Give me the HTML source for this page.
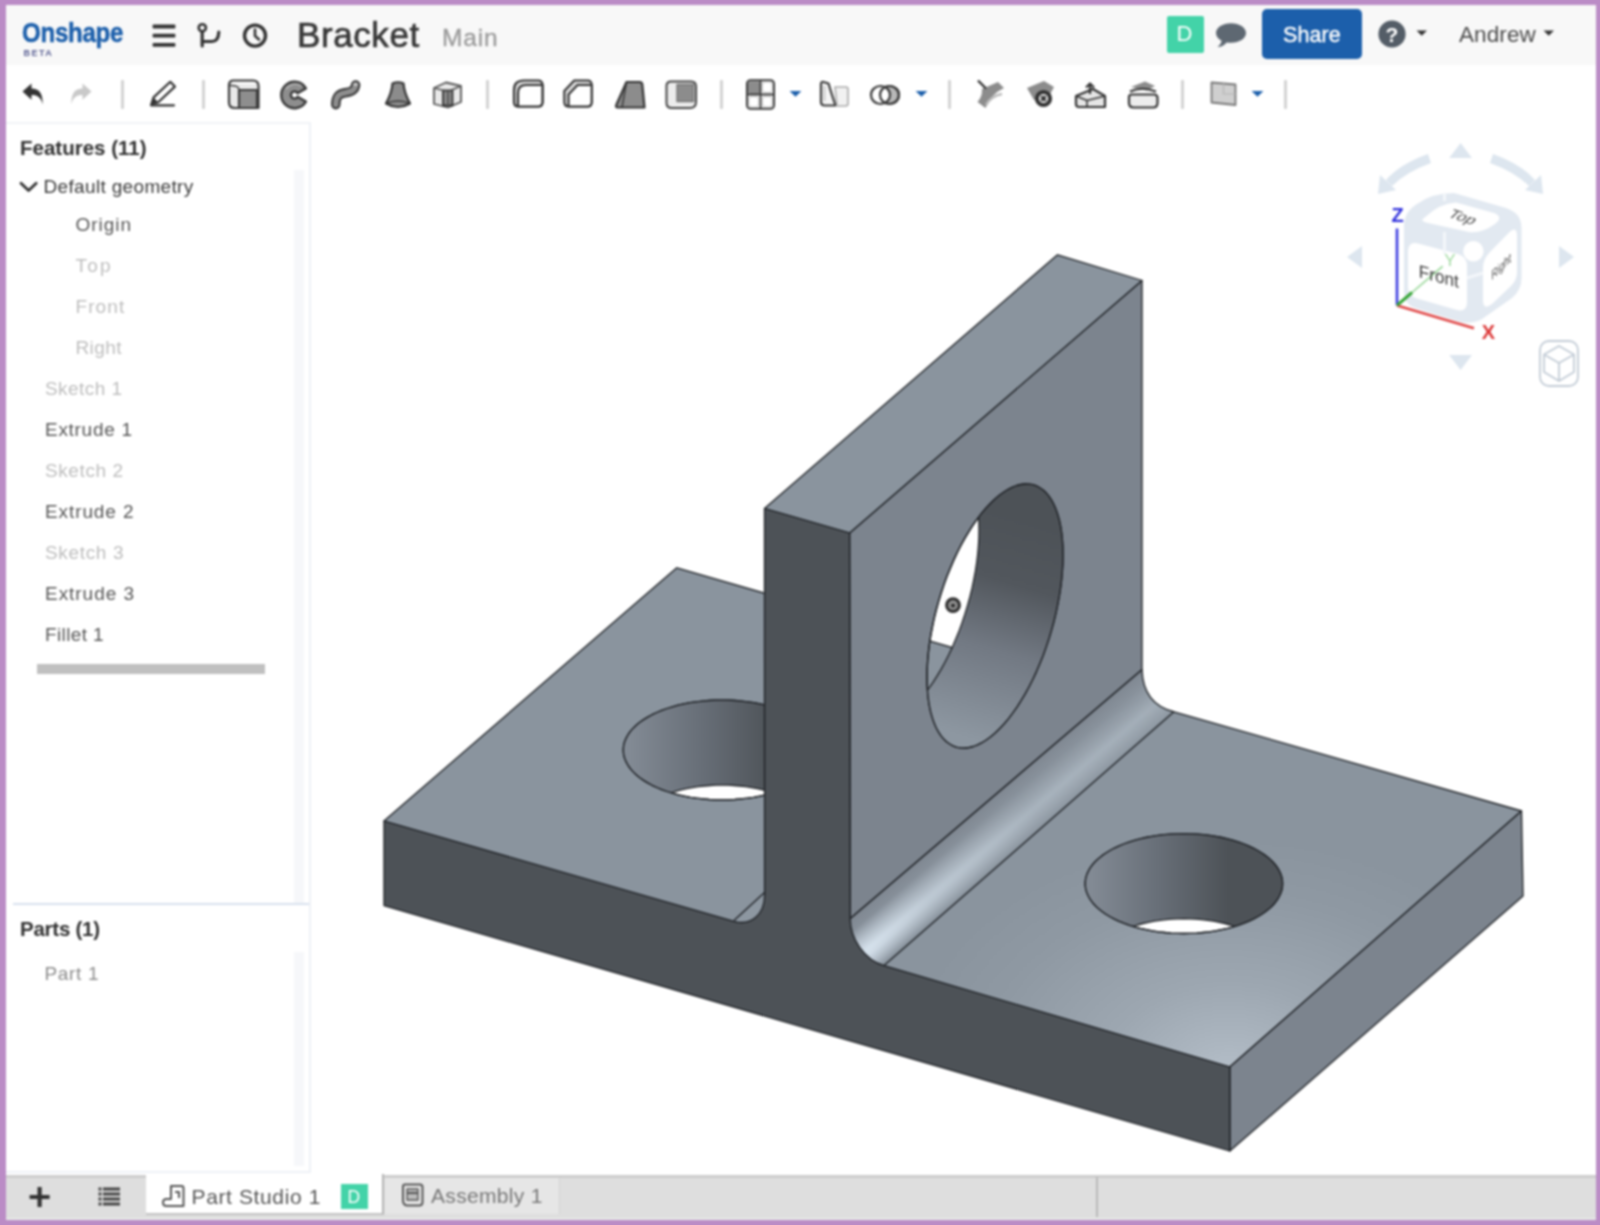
<!DOCTYPE html>
<html lang="en">
<head>
<meta charset="utf-8">
<title>Bracket - Onshape</title>
<style>
*{box-sizing:border-box;margin:0;padding:0}
html,body{width:1600px;height:1225px;overflow:hidden;background:#bb8cc6;font-family:"Liberation Sans","DejaVu Sans",sans-serif;color:#333}
.abs{position:absolute}
#app{position:absolute;left:6px;top:5px;width:1590px;height:1215px;background:#fff;overflow:hidden}
#page{position:absolute;left:0;top:0;width:1600px;height:1225px;overflow:hidden;filter:blur(1.1px)}
.hdr{position:absolute;left:6px;top:5px;width:1590px;height:60px;background:#f8f8f8}
.t{position:absolute;white-space:nowrap;line-height:1}
.model{position:absolute;left:0;top:0}
.sep{position:absolute;top:80px;width:3px;height:29px;background:#d3d3d3;border-radius:1px}
.ico{position:absolute}
.row{position:absolute;white-space:nowrap;line-height:1;font-size:19px;letter-spacing:-0.2px}
.dim{color:#bdbdbd}
.mid{color:#555}
</style>
</head>
<body>
<div id="page">
<div id="app"></div>
<div class="hdr"></div>

<!-- header -->
<div class="t" id="logo" style="left:22px;top:18.5px;font-size:27.5px;font-weight:bold;color:#1c5fab;transform-origin:0 0;transform:scaleX(0.875);letter-spacing:-0.3px;-webkit-text-stroke:0.5px #1c5fab">Onshape</div>
<div class="t" id="beta" style="left:23.5px;top:48.5px;font-size:9px;font-weight:bold;color:#5b6194;letter-spacing:1.5px">BETA</div>
<svg class="ico" style="left:150px;top:20px" width="30" height="30" viewBox="0 0 30 30"><g fill="#333"><rect x="2.6" y="4.5" width="22.8" height="3.9" rx="1"/><rect x="2.6" y="13.7" width="22.8" height="3.9" rx="1"/><rect x="2.6" y="22.9" width="22.8" height="3.9" rx="1"/></g></svg>
<svg class="ico" style="left:194px;top:20px" width="32" height="30" viewBox="0 0 32 30"><g fill="none" stroke="#333" stroke-width="3.2" stroke-linecap="round"><circle cx="8.3" cy="7.8" r="3.6" stroke-width="2.6"/><path d="M8.2 12 V26"/><path d="M8.4 21.5 H18 Q24.5 21.5 24.8 12"/></g></svg>
<svg class="ico" style="left:240px;top:20px" width="30" height="30" viewBox="0 0 30 30"><g fill="none" stroke="#333" stroke-linecap="round"><circle cx="15" cy="15.6" r="10.5" stroke-width="3.4"/><path d="M15 9.5 V16 L19 19.5" stroke-width="2.6"/></g></svg>
<div class="t" id="title" style="left:297px;top:17px;font-size:35px;color:#383838;letter-spacing:0.6px;-webkit-text-stroke:0.7px #383838">Bracket</div>
<div class="t" id="main" style="left:442px;top:26px;font-size:24.5px;color:#9a9a9a;letter-spacing:0.8px;-webkit-text-stroke:0.3px #9a9a9a">Main</div>
<!-- right header -->
<div class="abs" style="left:1167px;top:16px;width:37px;height:37px;background:#43d3a8;border-radius:2px"></div>
<div class="t" id="dbadge" style="left:1176.5px;top:23px;font-size:22px;color:#fff">D</div>
<svg class="ico" style="left:1213px;top:20px" width="36" height="30" viewBox="0 0 36 30"><path d="M18 3.2 C9.6 3.2 3 7.6 3 13 C3 16.2 5.2 19 8.6 20.8 C8.2 23.2 6.6 25.4 4.4 27 C8.6 26.8 11.8 25 13.6 22.4 C15 22.7 16.5 22.8 18 22.8 C26.4 22.8 33 18.4 33 13 C33 7.6 26.4 3.2 18 3.2 Z" fill="#5e6872"/></svg>
<div class="abs" style="left:1262px;top:9px;width:100px;height:50px;background:#1c5fab;border-radius:5px"></div>
<div class="t" id="share" style="left:1283px;top:24.5px;font-size:21.5px;color:#fff;letter-spacing:0.1px;-webkit-text-stroke:0.4px #fff">Share</div>
<svg class="ico" style="left:1376px;top:18px" width="32" height="32" viewBox="0 0 32 32"><circle cx="16" cy="16" r="13.6" fill="#545d67"/><text x="16" y="23.6" text-anchor="middle" font-family="Liberation Sans, sans-serif" font-weight="bold" font-size="21" fill="#fff">?</text></svg>
<svg class="ico" style="left:1415px;top:29px" width="14" height="8" viewBox="0 0 14 8"><path d="M1.5 1.5 H12 L6.75 6.8 Z" fill="#333"/></svg>
<div class="t" id="andrew" style="left:1459px;top:24px;font-size:22.5px;color:#4a4a4a;letter-spacing:0.1px">Andrew</div>
<svg class="ico" style="left:1542px;top:29px" width="14" height="8" viewBox="0 0 14 8"><path d="M1.5 1.5 H12 L6.75 6.8 Z" fill="#333"/></svg>

<!-- toolbar -->
<svg class="ico" style="left:18px;top:78px" width="30" height="32" viewBox="0 0 30 32"><path d="M4.5 13.5 L13.5 5.5 V10.5 C21 10.5 25 15 24.6 26.5 C23 19.5 20 17 13.5 17 V21.8 Z" fill="#333"/></svg>
<svg class="ico" style="left:66px;top:78px" width="30" height="32" viewBox="0 0 30 32"><path d="M25.5 13.5 L16.5 5.5 V10.5 C9 10.5 5 15 5.4 26.5 C7 19.5 10 17 16.5 17 V21.8 Z" fill="#c9c9c9"/></svg>
<div class="sep" style="left:121px"></div>
<svg class="ico" style="left:146px;top:78px" width="34" height="32" viewBox="0 0 34 32"><g fill="none" stroke="#333" stroke-width="2.2" stroke-linejoin="round" stroke-linecap="round"><path d="M5.4 26 L7.6 19.4 L24.3 3.8 L28.9 8.6 L12.2 24.2 Z"/><path d="M5 27.3 H28"/></g><path d="M5.4 26 L7.6 19.4 L12.2 24.2 Z" fill="#333"/></svg>
<div class="sep" style="left:202px"></div>
<!-- extrude -->
<svg class="ico" style="left:226px;top:77px" width="36" height="36" viewBox="0 0 36 36"><g stroke="#3a3a3a" stroke-width="2.2" stroke-linejoin="round"><path d="M3 8 Q3 3.5 7.5 3.5 H27 Q32.5 3.5 32.5 9 V31 H8.5 Q3 31 3 25.5 Z" fill="#e9e9e9"/><path d="M13 13 H31 V31 H13 Z" fill="#8e8e8e"/><path d="M3.5 8.5 Q13 8 13 13" fill="none" stroke-width="1.5"/></g><path d="M6 6.2 H29" stroke="#fff" stroke-width="2" fill="none"/></svg>
<!-- revolve -->
<svg class="ico" style="left:278px;top:78px" width="34" height="34" viewBox="0 0 34 34"><path d="M27.9 10.4 A13.2 13.2 0 1 0 27.9 23.6 L19.6 18.8 A3.6 3.6 0 1 1 19.6 15.2 Z" fill="#8e8e8e" stroke="#3a3a3a" stroke-width="2.4" stroke-linejoin="round"/><path d="M23.5 8 A11 11 0 0 0 8 11" fill="none" stroke="#b5b5b5" stroke-width="1.6"/></svg>
<!-- sweep -->
<svg class="ico" style="left:328px;top:78px" width="36" height="34" viewBox="0 0 36 34"><g fill="none" stroke-linecap="round"><path d="M7.8 26.6 C7.8 18 11 15.8 17 14.8 C24 13.6 27 12 27.6 7" stroke="#3a3a3a" stroke-width="9.6"/><path d="M7.8 26.6 C7.8 18 11 15.8 17 14.8 C24 13.6 27 12 27.6 7" stroke="#8e8e8e" stroke-width="5.4"/></g><ellipse cx="27.5" cy="6.4" rx="2.6" ry="1.6" fill="#c4c4c4"/></svg>
<!-- loft -->
<svg class="ico" style="left:381px;top:78px" width="34" height="34" viewBox="0 0 34 34"><path d="M11.5 5.5 Q17 3 22.5 5.5 C23 14 25.5 19 29 25.5 Q17 32.5 5 25.5 C8.5 19 11 14 11.5 5.5 Z" fill="#8c8c8c" stroke="#333" stroke-width="2.2" stroke-linejoin="round"/><path d="M5 25.5 Q17 20.5 29 25.5" fill="none" stroke="#333" stroke-width="1.6"/></svg>
<!-- thicken -->
<svg class="ico" style="left:431px;top:78px" width="34" height="34" viewBox="0 0 34 34"><g stroke="#555" stroke-width="1.8" stroke-linejoin="round"><path d="M3 10 L15 4.5 L30 8 V24 L17 29.5 L3 26 Z" fill="#e9e9e9"/><path d="M12 12.5 H21.5 V27.5 H12 Z" fill="#8c8c8c" stroke="#333"/><path d="M3 10 L17 13.5 L30 8 M17 13.5 V29.5" fill="none"/></g></svg>
<div class="sep" style="left:486px"></div>
<!-- fillet -->
<svg class="ico" style="left:510px;top:77px" width="36" height="34" viewBox="0 0 36 34"><g stroke="#333" stroke-width="2.2" stroke-linejoin="round" fill="#fff"><path d="M4 13 Q4 3.5 14 3.5 H28 Q32.5 3.5 32.5 8 V25 Q32.5 29.5 28 29.5 H8 Q4 29.5 4 25 Z" fill="#d9d9d9"/><path d="M8 16 Q8 8 16 8 H32.5 V25 Q32.5 29.5 28 29.5 H8 Z"/></g></svg>
<!-- chamfer -->
<svg class="ico" style="left:561px;top:77px" width="34" height="34" viewBox="0 0 36 34" preserveAspectRatio="none"><g stroke="#333" stroke-width="2.2" stroke-linejoin="round" fill="#fff"><path d="M3.5 14 L14 3.5 H28 Q32.5 3.5 32.5 8 V25 Q32.5 29.5 28 29.5 H8 Q3.5 29.5 3.5 25 Z" fill="#d9d9d9"/><path d="M8 17.5 L17.5 8 H32.5 V25 Q32.5 29.5 28 29.5 H8 Z"/></g></svg>
<!-- draft -->
<svg class="ico" style="left:612px;top:78px" width="36" height="34" viewBox="0 0 36 34"><path d="M14.5 4 H27.5 Q30 4 30.3 6.5 L32.5 29.5 H6 Q3 29.5 4.5 26.5 Z" fill="#8c8c8c" stroke="#333" stroke-width="2.2" stroke-linejoin="round"/><path d="M14.5 4 L10 29.5" fill="none" stroke="#333" stroke-width="1.4"/></svg>
<!-- shell -->
<svg class="ico" style="left:663px;top:78px" width="36" height="34" viewBox="0 0 36 34"><g stroke="#444" stroke-width="2" stroke-linejoin="round"><path d="M3.5 8 Q3.5 3.5 8 3.5 H28 Q33 3.5 33 8.5 V24 Q33 30 27 30 H9 Q3.5 30 3.5 25 Z" fill="#ececec"/><path d="M14 6.5 H30.5 V23.5 H14 Z" fill="#8c8c8c" stroke="#777" stroke-width="1.4"/></g></svg>
<div class="sep" style="left:720px"></div>
<!-- pattern -->
<svg class="ico" style="left:744px;top:77px" width="34" height="36" viewBox="0 0 34 36"><rect x="3" y="3.2" width="27" height="28.6" rx="3.5" fill="#fff" stroke="#3a3a3a" stroke-width="2"/><rect x="4" y="4.2" width="12.2" height="12.8" rx="2" fill="#8c8c8c"/><path d="M16.5 3.2 V31.8 M3 17.5 H30" stroke="#3a3a3a" stroke-width="1.8" fill="none"/><g fill="none" stroke="#cfcfcf" stroke-width="1.2"><rect x="18.5" y="5.2" width="9.5" height="10.2" rx="2.5"/><rect x="5" y="19.6" width="9.5" height="10.2" rx="2.5"/><rect x="18.5" y="19.6" width="9.5" height="10.2" rx="2.5"/></g></svg>
<svg class="ico" style="left:788px;top:90px" width="15" height="8" viewBox="0 0 15 8"><path d="M1.6 1 H13.4 L7.5 6.8 Z" fill="#1c5fab"/></svg>
<!-- mirror -->
<svg class="ico" style="left:816px;top:78px" width="36" height="34" viewBox="0 0 36 34"><g stroke-width="2" stroke-linejoin="round"><path d="M5 6 Q5 3.5 7.5 4 L12.5 5.5 Q15 14 19.5 27.5 H9 Q5 27.5 5 24 Z" fill="#f4f4f4" stroke="#3a3a3a" stroke-width="2.2"/><path d="M8.5 8 V23" stroke="#bbb" stroke-width="1.4" fill="none"/><path d="M19 9 H30 Q32 9 32 11.5 V25.5 Q32 28 29.5 28 H21 Z" fill="#f1f1f1" stroke="#aaa" stroke-width="1.6"/></g></svg>
<!-- boolean -->
<svg class="ico" style="left:867px;top:78px" width="36" height="34" viewBox="0 0 36 34"><g stroke="#3a3a3a" stroke-width="2.2"><ellipse cx="22.5" cy="17" rx="9.5" ry="9" fill="#b9b9b9"/><ellipse cx="13.5" cy="17" rx="9.5" ry="9" fill="#fff"/><ellipse cx="22.5" cy="17" rx="9.5" ry="9" fill="none"/></g></svg>
<svg class="ico" style="left:913.5px;top:90px" width="15" height="8" viewBox="0 0 15 8"><path d="M1.6 1 H13.4 L7.5 6.8 Z" fill="#1c5fab"/></svg>
<div class="sep" style="left:948px"></div>
<!-- split -->
<svg class="ico" style="left:973px;top:78px" width="34" height="34" viewBox="0 0 34 34"><path d="M9 11 L25 4 L31 10 Q18 16 12.5 30 L4.5 24 Q9.5 18.5 9 11 Z" fill="#8c8c8c"/><path d="M5 2.5 L13 10.5" stroke="#333" stroke-width="2.4" fill="none"/><path d="M13 27 Q18 18 29 16" stroke="#bbb" stroke-width="2.6" fill="none"/></svg>
<!-- delete face -->
<svg class="ico" style="left:1024px;top:78px" width="34" height="34" viewBox="0 0 34 34"><path d="M3 10 L20 3 L30 9 L24 20 L10 22 Z" fill="#8c8c8c"/><circle cx="19.5" cy="20.5" r="6.6" fill="#fff" stroke="#333" stroke-width="4"/><path d="M17.2 18.2 L21.8 22.8 M21.8 18.2 L17.2 22.8" stroke="#333" stroke-width="2.6"/></svg>
<!-- move face -->
<svg class="ico" style="left:1073px;top:78px" width="36" height="34" viewBox="0 0 36 34"><g stroke="#333" stroke-width="2.2" stroke-linejoin="round"><path d="M3 18 L20 11 L32 18 V29 H6 Q3 29 3 26 Z" fill="#e6e6e6"/><path d="M3 18 L14 22.5 L32 18 M14 22.5 V29" fill="none" stroke-width="1.6"/><path d="M17 16 V6 M13 9.5 L17 5.5 L21 9.5" fill="none"/></g></svg>
<!-- replace face -->
<svg class="ico" style="left:1125px;top:78px" width="36" height="34" viewBox="0 0 36 34"><path d="M6 9 L20 3.5 L30 8 L22 12.5 Z" fill="#8c8c8c"/><g stroke="#333" stroke-width="2.2" stroke-linejoin="round"><path d="M5 13.5 Q17 8 31 13.5" fill="none"/><path d="M4 19 Q4 16.5 7 16.5 H29 Q32.5 16.5 32.5 20 V25 Q32.5 29.5 28 29.5 H8.5 Q4 29.5 4 25 Z" fill="#ededed"/></g></svg>
<div class="sep" style="left:1181px"></div>
<!-- plane -->
<svg class="ico" style="left:1208px;top:77px" width="32" height="32" viewBox="0 0 32 32"><path d="M3.5 5.5 L27.5 7.5 V28 L3.5 25.5 Z" fill="#cfcfcf" stroke="#777" stroke-width="1.8" stroke-linejoin="round"/><path d="M15.5 6.5 V17 H27.5" fill="none" stroke="#b5b5b5" stroke-width="1.2"/></svg>
<svg class="ico" style="left:1250px;top:90px" width="15" height="8" viewBox="0 0 15 8"><path d="M1.6 1 H13.4 L7.5 6.8 Z" fill="#1c5fab"/></svg>
<div class="sep" style="left:1284px"></div>

<!-- left panel -->
<div class="abs" style="left:6px;top:122px;width:305px;height:1051px;background:#fff;border-top:2px solid #f1f3f7;border-right:2px solid #eef1f6;border-bottom:2px solid #eef1f6"></div>
<div class="abs" style="left:294px;top:170px;width:10px;height:734px;background:#f6f7fa"></div>
<div class="abs" style="left:294px;top:952px;width:10px;height:214px;background:#f6f7fa"></div>
<div class="abs" style="left:13px;top:903px;width:296px;height:2px;background:#d8e1ee"></div>
<div class="t" id="feat" style="left:20px;top:138px;font-size:20.5px;font-weight:bold;color:#303030;letter-spacing:0px">Features (11)</div>
<svg class="ico" style="left:18px;top:178px" width="22" height="18" viewBox="0 0 22 18"><path d="M3 5.2 L10.6 12.6 L18.2 5.2" fill="none" stroke="#333" stroke-width="2.8" stroke-linecap="round" stroke-linejoin="round"/></svg>
<div class="row" id="r0" style="letter-spacing:0.34px;left:43.5px;top:177px;color:#3a3a3a">Default geometry</div>
<div class="row mid" id="r1" style="letter-spacing:0.96px;left:75.5px;top:215px">Origin</div>
<div class="row dim" id="r2" style="letter-spacing:2.2px;left:75.5px;top:256px">Top</div>
<div class="row dim" id="r3" style="letter-spacing:1.09px;left:75.5px;top:297px">Front</div>
<div class="row dim" id="r4" style="letter-spacing:0.4px;left:75.5px;top:338px">Right</div>
<div class="row dim" id="r5" style="letter-spacing:0.44px;left:45px;top:379px">Sketch 1</div>
<div class="row mid" id="r6" style="letter-spacing:0.71px;left:45px;top:420px">Extrude 1</div>
<div class="row dim" id="r7" style="letter-spacing:0.59px;left:45px;top:461px">Sketch 2</div>
<div class="row mid" id="r8" style="letter-spacing:0.9px;left:45px;top:502px">Extrude 2</div>
<div class="row dim" id="r9" style="letter-spacing:0.66px;left:45px;top:543px">Sketch 3</div>
<div class="row mid" id="r10" style="letter-spacing:0.96px;left:45px;top:584px">Extrude 3</div>
<div class="row mid" id="r11" style="letter-spacing:0.36px;left:45px;top:625px">Fillet 1</div>
<div class="abs" style="left:37px;top:663.5px;width:228px;height:10.5px;background:#c0c0c0"></div>
<div class="t" id="parts" style="left:20px;top:919px;font-size:20.5px;font-weight:bold;color:#303030;letter-spacing:-0.25px">Parts (1)</div>
<div class="row" id="p1" style="letter-spacing:0.68px;left:44.5px;top:964px;color:#8c8c8c">Part 1</div>

<svg class="model" width="1600" height="1225" viewBox="0 0 1600 1225"><defs>
<radialGradient id="gTop" gradientUnits="userSpaceOnUse" cx="1229" cy="1075" r="300" gradientTransform="translate(1229 1075) scale(1.1 0.8) translate(-1229 -1075)"><stop offset="0" stop-color="#b5bfc9"/><stop offset="0.12" stop-color="#adb7c1"/><stop offset="0.38" stop-color="#9da7b1"/><stop offset="0.75" stop-color="#8f99a3"/><stop offset="1" stop-color="#8a949e"/></radialGradient>
<linearGradient id="gHoleL" gradientUnits="userSpaceOnUse" x1="630" y1="0" x2="775" y2="0"><stop offset="0" stop-color="#828a94"/><stop offset="0.5" stop-color="#676e77"/><stop offset="1" stop-color="#4d5257"/></linearGradient>
<linearGradient id="gHoleR" gradientUnits="userSpaceOnUse" x1="1092" y1="0" x2="1228" y2="0"><stop offset="0" stop-color="#828a94"/><stop offset="0.5" stop-color="#676e77"/><stop offset="1" stop-color="#4d5257"/></linearGradient>
<linearGradient id="gHoleP" gradientUnits="userSpaceOnUse" x1="1040" y1="520" x2="975" y2="740"><stop offset="0" stop-color="#4d5257"/><stop offset="0.3" stop-color="#52575d"/><stop offset="0.6" stop-color="#727983"/><stop offset="1" stop-color="#8d97a1"/></linearGradient>
<linearGradient id="gFil" gradientUnits="userSpaceOnUse" x1="985" y1="802" x2="1021.5" y2="844.5"><stop offset="0" stop-color="#7e8690"/><stop offset="0.25" stop-color="#88919b"/><stop offset="0.5" stop-color="#97a1ab"/><stop offset="0.66" stop-color="#a3aeb8"/><stop offset="0.85" stop-color="#97a1ab"/><stop offset="1" stop-color="#8c96a0"/></linearGradient>
<linearGradient id="gFil2" gradientUnits="userSpaceOnUse" x1="985" y1="802" x2="1021.5" y2="844.5"><stop offset="0.2" stop-color="#dbe7f2" stop-opacity="0"/><stop offset="0.62" stop-color="#dbe7f2" stop-opacity="0.9"/><stop offset="0.72" stop-color="#dbe7f2" stop-opacity="0.8"/><stop offset="1" stop-color="#dbe7f2" stop-opacity="0"/></linearGradient>
<linearGradient id="gFilM" gradientUnits="userSpaceOnUse" x1="1160" y1="690" x2="865" y2="943"><stop offset="0" stop-color="#fff" stop-opacity="0"/><stop offset="0.45" stop-color="#fff" stop-opacity="0.12"/><stop offset="0.8" stop-color="#fff" stop-opacity="0.55"/><stop offset="1" stop-color="#fff" stop-opacity="1"/></linearGradient>
<mask id="mFil" maskUnits="userSpaceOnUse" x="800" y="600" width="450" height="420"><rect x="800" y="600" width="450" height="420" fill="url(#gFilM)"/></mask>
<clipPath id="cHoleP"><path d="M1063.0 554.8 L1062.9 562.6 L1062.4 570.6 L1061.7 578.8 L1060.7 587.2 L1059.4 595.7 L1057.8 604.2 L1056.0 612.9 L1053.9 621.5 L1051.5 630.1 L1048.9 638.7 L1046.1 647.1 L1043.1 655.5 L1039.8 663.6 L1036.4 671.6 L1032.8 679.3 L1029.0 686.7 L1025.1 693.9 L1021.0 700.7 L1016.9 707.1 L1012.6 713.2 L1008.3 718.8 L1003.9 724.0 L999.4 728.7 L995.0 733.0 L990.6 736.8 L986.1 740.0 L981.7 742.7 L977.4 744.9 L973.1 746.5 L969.0 747.5 L964.9 748.0 L961.0 747.9 L957.2 747.3 L953.6 746.1 L950.2 744.3 L946.9 742.0 L943.9 739.2 L941.1 735.8 L938.5 731.9 L936.1 727.5 L934.0 722.6 L932.2 717.3 L930.6 711.6 L929.3 705.4 L928.3 698.8 L927.6 691.9 L927.1 684.7 L927.0 677.2 L927.1 669.4 L927.6 661.4 L928.3 653.2 L929.3 644.8 L930.6 636.3 L932.2 627.8 L934.0 619.1 L936.1 610.5 L938.5 601.9 L941.1 593.3 L943.9 584.9 L946.9 576.5 L950.2 568.4 L953.6 560.4 L957.2 552.7 L961.0 545.3 L964.9 538.1 L969.0 531.3 L973.1 524.9 L977.4 518.8 L981.7 513.2 L986.1 508.0 L990.6 503.3 L995.0 499.0 L999.4 495.2 L1003.9 492.0 L1008.3 489.3 L1012.6 487.1 L1016.9 485.5 L1021.0 484.5 L1025.1 484.0 L1029.0 484.1 L1032.8 484.7 L1036.4 485.9 L1039.8 487.7 L1043.1 490.0 L1046.1 492.8 L1048.9 496.2 L1051.5 500.1 L1053.9 504.5 L1056.0 509.4 L1057.8 514.7 L1059.4 520.4 L1060.7 526.6 L1061.7 533.2 L1062.4 540.1 L1062.9 547.3 Z "/></clipPath>
<clipPath id="cHoleL"><path d="M820.7 750.0 L820.5 753.3 L819.9 756.5 L818.8 759.7 L817.3 762.9 L815.5 766.0 L813.2 769.1 L810.5 772.1 L807.5 775.0 L804.1 777.7 L800.3 780.4 L796.2 782.9 L791.8 785.3 L787.1 787.5 L782.1 789.6 L776.8 791.5 L771.4 793.2 L765.7 794.8 L759.8 796.1 L753.7 797.3 L747.5 798.2 L741.3 798.9 L734.9 799.5 L728.5 799.8 L722.0 799.9 L715.5 799.8 L709.1 799.5 L702.7 798.9 L696.5 798.2 L690.3 797.3 L684.2 796.1 L678.3 794.8 L672.6 793.2 L667.2 791.5 L661.9 789.6 L656.9 787.5 L652.2 785.3 L647.8 782.9 L643.7 780.4 L639.9 777.7 L636.5 775.0 L633.5 772.1 L630.8 769.1 L628.5 766.0 L626.7 762.9 L625.2 759.7 L624.1 756.5 L623.5 753.3 L623.3 750.0 L623.5 746.7 L624.1 743.5 L625.2 740.3 L626.7 737.1 L628.5 734.0 L630.8 730.9 L633.5 727.9 L636.5 725.1 L639.9 722.3 L643.7 719.6 L647.8 717.1 L652.2 714.7 L656.9 712.5 L661.9 710.4 L667.2 708.5 L672.6 706.8 L678.3 705.2 L684.2 703.9 L690.3 702.7 L696.5 701.8 L702.7 701.1 L709.1 700.5 L715.5 700.2 L722.0 700.1 L728.5 700.2 L734.9 700.5 L741.3 701.1 L747.5 701.8 L753.7 702.7 L759.8 703.9 L765.7 705.2 L771.4 706.8 L776.8 708.5 L782.1 710.4 L787.1 712.5 L791.8 714.7 L796.2 717.1 L800.3 719.6 L804.1 722.3 L807.5 725.0 L810.5 727.9 L813.2 730.9 L815.5 734.0 L817.3 737.1 L818.8 740.3 L819.9 743.5 L820.5 746.7 Z "/></clipPath>
<clipPath id="cHoleR"><path d="M1282.6 883.6 L1282.4 886.9 L1281.8 890.1 L1280.7 893.3 L1279.2 896.5 L1277.4 899.6 L1275.1 902.7 L1272.4 905.7 L1269.4 908.6 L1266.0 911.3 L1262.2 914.0 L1258.1 916.5 L1253.7 918.9 L1249.0 921.1 L1244.0 923.2 L1238.7 925.1 L1233.2 926.8 L1227.6 928.4 L1221.7 929.7 L1215.6 930.9 L1209.4 931.8 L1203.2 932.5 L1196.8 933.1 L1190.4 933.4 L1183.9 933.5 L1177.4 933.4 L1171.0 933.1 L1164.6 932.5 L1158.4 931.8 L1152.2 930.9 L1146.1 929.7 L1140.2 928.4 L1134.6 926.8 L1129.1 925.1 L1123.8 923.2 L1118.8 921.1 L1114.1 918.9 L1109.7 916.5 L1105.6 914.0 L1101.8 911.3 L1098.4 908.6 L1095.4 905.7 L1092.7 902.7 L1090.4 899.6 L1088.6 896.5 L1087.1 893.3 L1086.0 890.1 L1085.4 886.9 L1085.2 883.6 L1085.4 880.3 L1086.0 877.1 L1087.1 873.9 L1088.6 870.7 L1090.4 867.6 L1092.7 864.5 L1095.4 861.5 L1098.4 858.7 L1101.8 855.9 L1105.6 853.2 L1109.7 850.7 L1114.1 848.3 L1118.8 846.1 L1123.8 844.0 L1129.1 842.1 L1134.5 840.4 L1140.2 838.8 L1146.1 837.5 L1152.2 836.3 L1158.4 835.4 L1164.6 834.7 L1171.0 834.1 L1177.4 833.8 L1183.9 833.7 L1190.4 833.8 L1196.8 834.1 L1203.2 834.7 L1209.4 835.4 L1215.6 836.3 L1221.7 837.5 L1227.6 838.8 L1233.2 840.4 L1238.7 842.1 L1244.0 844.0 L1249.0 846.1 L1253.7 848.3 L1258.1 850.7 L1262.2 853.2 L1266.0 855.9 L1269.4 858.6 L1272.4 861.5 L1275.1 864.5 L1277.4 867.6 L1279.2 870.7 L1280.7 873.9 L1281.8 877.1 L1282.4 880.3 Z "/></clipPath>
</defs>
<path d="M676.8 567.8 L1173.9 711.8 L1521.5 811.0 L1229.8 1067.0 L384.0 821.0 Z M820.7 750.0 L820.5 753.3 L819.9 756.5 L818.8 759.7 L817.3 762.9 L815.5 766.0 L813.2 769.1 L810.5 772.1 L807.5 775.0 L804.1 777.7 L800.3 780.4 L796.2 782.9 L791.8 785.3 L787.1 787.5 L782.1 789.6 L776.8 791.5 L771.4 793.2 L765.7 794.8 L759.8 796.1 L753.7 797.3 L747.5 798.2 L741.3 798.9 L734.9 799.5 L728.5 799.8 L722.0 799.9 L715.5 799.8 L709.1 799.5 L702.7 798.9 L696.5 798.2 L690.3 797.3 L684.2 796.1 L678.3 794.8 L672.6 793.2 L667.2 791.5 L661.9 789.6 L656.9 787.5 L652.2 785.3 L647.8 782.9 L643.7 780.4 L639.9 777.7 L636.5 775.0 L633.5 772.1 L630.8 769.1 L628.5 766.0 L626.7 762.9 L625.2 759.7 L624.1 756.5 L623.5 753.3 L623.3 750.0 L623.5 746.7 L624.1 743.5 L625.2 740.3 L626.7 737.1 L628.5 734.0 L630.8 730.9 L633.5 727.9 L636.5 725.1 L639.9 722.3 L643.7 719.6 L647.8 717.1 L652.2 714.7 L656.9 712.5 L661.9 710.4 L667.2 708.5 L672.6 706.8 L678.3 705.2 L684.2 703.9 L690.3 702.7 L696.5 701.8 L702.7 701.1 L709.1 700.5 L715.5 700.2 L722.0 700.1 L728.5 700.2 L734.9 700.5 L741.3 701.1 L747.5 701.8 L753.7 702.7 L759.8 703.9 L765.7 705.2 L771.4 706.8 L776.8 708.5 L782.1 710.4 L787.1 712.5 L791.8 714.7 L796.2 717.1 L800.3 719.6 L804.1 722.3 L807.5 725.0 L810.5 727.9 L813.2 730.9 L815.5 734.0 L817.3 737.1 L818.8 740.3 L819.9 743.5 L820.5 746.7 Z M1282.6 883.6 L1282.4 886.9 L1281.8 890.1 L1280.7 893.3 L1279.2 896.5 L1277.4 899.6 L1275.1 902.7 L1272.4 905.7 L1269.4 908.6 L1266.0 911.3 L1262.2 914.0 L1258.1 916.5 L1253.7 918.9 L1249.0 921.1 L1244.0 923.2 L1238.7 925.1 L1233.2 926.8 L1227.6 928.4 L1221.7 929.7 L1215.6 930.9 L1209.4 931.8 L1203.2 932.5 L1196.8 933.1 L1190.4 933.4 L1183.9 933.5 L1177.4 933.4 L1171.0 933.1 L1164.6 932.5 L1158.4 931.8 L1152.2 930.9 L1146.1 929.7 L1140.2 928.4 L1134.6 926.8 L1129.1 925.1 L1123.8 923.2 L1118.8 921.1 L1114.1 918.9 L1109.7 916.5 L1105.6 914.0 L1101.8 911.3 L1098.4 908.6 L1095.4 905.7 L1092.7 902.7 L1090.4 899.6 L1088.6 896.5 L1087.1 893.3 L1086.0 890.1 L1085.4 886.9 L1085.2 883.6 L1085.4 880.3 L1086.0 877.1 L1087.1 873.9 L1088.6 870.7 L1090.4 867.6 L1092.7 864.5 L1095.4 861.5 L1098.4 858.7 L1101.8 855.9 L1105.6 853.2 L1109.7 850.7 L1114.1 848.3 L1118.8 846.1 L1123.8 844.0 L1129.1 842.1 L1134.5 840.4 L1140.2 838.8 L1146.1 837.5 L1152.2 836.3 L1158.4 835.4 L1164.6 834.7 L1171.0 834.1 L1177.4 833.8 L1183.9 833.7 L1190.4 833.8 L1196.8 834.1 L1203.2 834.7 L1209.4 835.4 L1215.6 836.3 L1221.7 837.5 L1227.6 838.8 L1233.2 840.4 L1238.7 842.1 L1244.0 844.0 L1249.0 846.1 L1253.7 848.3 L1258.1 850.7 L1262.2 853.2 L1266.0 855.9 L1269.4 858.6 L1272.4 861.5 L1275.1 864.5 L1277.4 867.6 L1279.2 870.7 L1280.7 873.9 L1281.8 877.1 L1282.4 880.3 Z " fill="url(#gTop)" fill-rule="evenodd" stroke="#1c1f23" stroke-width="1.3" stroke-linejoin="round"/>
<g clip-path="url(#cHoleL)"><path d="M820.7 750.0 L820.5 753.3 L819.9 756.5 L818.8 759.7 L817.3 762.9 L815.5 766.0 L813.2 769.1 L810.5 772.1 L807.5 775.0 L804.1 777.7 L800.3 780.4 L796.2 782.9 L791.8 785.3 L787.1 787.5 L782.1 789.6 L776.8 791.5 L771.4 793.2 L765.7 794.8 L759.8 796.1 L753.7 797.3 L747.5 798.2 L741.3 798.9 L734.9 799.5 L728.5 799.8 L722.0 799.9 L715.5 799.8 L709.1 799.5 L702.7 798.9 L696.5 798.2 L690.3 797.3 L684.2 796.1 L678.3 794.8 L672.6 793.2 L667.2 791.5 L661.9 789.6 L656.9 787.5 L652.2 785.3 L647.8 782.9 L643.7 780.4 L639.9 777.7 L636.5 775.0 L633.5 772.1 L630.8 769.1 L628.5 766.0 L626.7 762.9 L625.2 759.7 L624.1 756.5 L623.5 753.3 L623.3 750.0 L623.5 746.7 L624.1 743.5 L625.2 740.3 L626.7 737.1 L628.5 734.0 L630.8 730.9 L633.5 727.9 L636.5 725.1 L639.9 722.3 L643.7 719.6 L647.8 717.1 L652.2 714.7 L656.9 712.5 L661.9 710.4 L667.2 708.5 L672.6 706.8 L678.3 705.2 L684.2 703.9 L690.3 702.7 L696.5 701.8 L702.7 701.1 L709.1 700.5 L715.5 700.2 L722.0 700.1 L728.5 700.2 L734.9 700.5 L741.3 701.1 L747.5 701.8 L753.7 702.7 L759.8 703.9 L765.7 705.2 L771.4 706.8 L776.8 708.5 L782.1 710.4 L787.1 712.5 L791.8 714.7 L796.2 717.1 L800.3 719.6 L804.1 722.3 L807.5 725.0 L810.5 727.9 L813.2 730.9 L815.5 734.0 L817.3 737.1 L818.8 740.3 L819.9 743.5 L820.5 746.7 Z M814.8 832.0 L814.6 835.1 L814.0 838.1 L813.0 841.2 L811.6 844.1 L809.9 847.1 L807.7 850.0 L805.2 852.8 L802.3 855.5 L799.1 858.1 L795.6 860.6 L791.8 862.9 L787.6 865.2 L783.2 867.3 L778.5 869.2 L773.5 871.0 L768.4 872.6 L763.0 874.1 L757.5 875.3 L751.8 876.4 L746.0 877.3 L740.1 878.0 L734.1 878.5 L728.1 878.8 L722.0 878.9 L715.9 878.8 L709.9 878.5 L703.9 878.0 L698.0 877.3 L692.2 876.4 L686.5 875.3 L681.0 874.1 L675.6 872.6 L670.5 871.0 L665.5 869.2 L660.8 867.3 L656.4 865.2 L652.2 862.9 L648.4 860.6 L644.9 858.1 L641.7 855.5 L638.8 852.8 L636.3 850.0 L634.1 847.1 L632.4 844.1 L631.0 841.2 L630.0 838.1 L629.4 835.1 L629.2 832.0 L629.4 828.9 L630.0 825.9 L631.0 822.9 L632.4 819.9 L634.1 816.9 L636.3 814.1 L638.8 811.3 L641.7 808.6 L644.9 805.9 L648.4 803.5 L652.2 801.1 L656.4 798.8 L660.8 796.7 L665.5 794.8 L670.5 793.0 L675.6 791.4 L681.0 789.9 L686.5 788.7 L692.2 787.6 L698.0 786.7 L703.9 786.0 L709.9 785.5 L715.9 785.2 L722.0 785.1 L728.1 785.2 L734.1 785.5 L740.1 786.0 L746.0 786.7 L751.8 787.6 L757.5 788.7 L763.0 789.9 L768.4 791.4 L773.5 793.0 L778.5 794.8 L783.2 796.7 L787.6 798.8 L791.8 801.1 L795.6 803.5 L799.1 805.9 L802.3 808.6 L805.2 811.3 L807.7 814.1 L809.9 816.9 L811.6 819.9 L813.0 822.9 L814.0 825.9 L814.6 828.9 Z " fill="url(#gHoleL)" fill-rule="evenodd"/><path d="M814.8 832.0 L814.6 835.1 L814.0 838.1 L813.0 841.2 L811.6 844.1 L809.9 847.1 L807.7 850.0 L805.2 852.8 L802.3 855.5 L799.1 858.1 L795.6 860.6 L791.8 862.9 L787.6 865.2 L783.2 867.3 L778.5 869.2 L773.5 871.0 L768.4 872.6 L763.0 874.1 L757.5 875.3 L751.8 876.4 L746.0 877.3 L740.1 878.0 L734.1 878.5 L728.1 878.8 L722.0 878.9 L715.9 878.8 L709.9 878.5 L703.9 878.0 L698.0 877.3 L692.2 876.4 L686.5 875.3 L681.0 874.1 L675.6 872.6 L670.5 871.0 L665.5 869.2 L660.8 867.3 L656.4 865.2 L652.2 862.9 L648.4 860.6 L644.9 858.1 L641.7 855.5 L638.8 852.8 L636.3 850.0 L634.1 847.1 L632.4 844.1 L631.0 841.2 L630.0 838.1 L629.4 835.1 L629.2 832.0 L629.4 828.9 L630.0 825.9 L631.0 822.9 L632.4 819.9 L634.1 816.9 L636.3 814.1 L638.8 811.3 L641.7 808.6 L644.9 805.9 L648.4 803.5 L652.2 801.1 L656.4 798.8 L660.8 796.7 L665.5 794.8 L670.5 793.0 L675.6 791.4 L681.0 789.9 L686.5 788.7 L692.2 787.6 L698.0 786.7 L703.9 786.0 L709.9 785.5 L715.9 785.2 L722.0 785.1 L728.1 785.2 L734.1 785.5 L740.1 786.0 L746.0 786.7 L751.8 787.6 L757.5 788.7 L763.0 789.9 L768.4 791.4 L773.5 793.0 L778.5 794.8 L783.2 796.7 L787.6 798.8 L791.8 801.1 L795.6 803.5 L799.1 805.9 L802.3 808.6 L805.2 811.3 L807.7 814.1 L809.9 816.9 L811.6 819.9 L813.0 822.9 L814.0 825.9 L814.6 828.9 Z " fill="none" stroke="#1c1f23" stroke-width="1.3" stroke-linejoin="round"/></g>
<path d="M820.7 750.0 L820.5 753.3 L819.9 756.5 L818.8 759.7 L817.3 762.9 L815.5 766.0 L813.2 769.1 L810.5 772.1 L807.5 775.0 L804.1 777.7 L800.3 780.4 L796.2 782.9 L791.8 785.3 L787.1 787.5 L782.1 789.6 L776.8 791.5 L771.4 793.2 L765.7 794.8 L759.8 796.1 L753.7 797.3 L747.5 798.2 L741.3 798.9 L734.9 799.5 L728.5 799.8 L722.0 799.9 L715.5 799.8 L709.1 799.5 L702.7 798.9 L696.5 798.2 L690.3 797.3 L684.2 796.1 L678.3 794.8 L672.6 793.2 L667.2 791.5 L661.9 789.6 L656.9 787.5 L652.2 785.3 L647.8 782.9 L643.7 780.4 L639.9 777.7 L636.5 775.0 L633.5 772.1 L630.8 769.1 L628.5 766.0 L626.7 762.9 L625.2 759.7 L624.1 756.5 L623.5 753.3 L623.3 750.0 L623.5 746.7 L624.1 743.5 L625.2 740.3 L626.7 737.1 L628.5 734.0 L630.8 730.9 L633.5 727.9 L636.5 725.1 L639.9 722.3 L643.7 719.6 L647.8 717.1 L652.2 714.7 L656.9 712.5 L661.9 710.4 L667.2 708.5 L672.6 706.8 L678.3 705.2 L684.2 703.9 L690.3 702.7 L696.5 701.8 L702.7 701.1 L709.1 700.5 L715.5 700.2 L722.0 700.1 L728.5 700.2 L734.9 700.5 L741.3 701.1 L747.5 701.8 L753.7 702.7 L759.8 703.9 L765.7 705.2 L771.4 706.8 L776.8 708.5 L782.1 710.4 L787.1 712.5 L791.8 714.7 L796.2 717.1 L800.3 719.6 L804.1 722.3 L807.5 725.0 L810.5 727.9 L813.2 730.9 L815.5 734.0 L817.3 737.1 L818.8 740.3 L819.9 743.5 L820.5 746.7 Z " fill="none" stroke="#1c1f23" stroke-width="1.3" stroke-linejoin="round"/>
<g clip-path="url(#cHoleR)"><path d="M1282.6 883.6 L1282.4 886.9 L1281.8 890.1 L1280.7 893.3 L1279.2 896.5 L1277.4 899.6 L1275.1 902.7 L1272.4 905.7 L1269.4 908.6 L1266.0 911.3 L1262.2 914.0 L1258.1 916.5 L1253.7 918.9 L1249.0 921.1 L1244.0 923.2 L1238.7 925.1 L1233.2 926.8 L1227.6 928.4 L1221.7 929.7 L1215.6 930.9 L1209.4 931.8 L1203.2 932.5 L1196.8 933.1 L1190.4 933.4 L1183.9 933.5 L1177.4 933.4 L1171.0 933.1 L1164.6 932.5 L1158.4 931.8 L1152.2 930.9 L1146.1 929.7 L1140.2 928.4 L1134.6 926.8 L1129.1 925.1 L1123.8 923.2 L1118.8 921.1 L1114.1 918.9 L1109.7 916.5 L1105.6 914.0 L1101.8 911.3 L1098.4 908.6 L1095.4 905.7 L1092.7 902.7 L1090.4 899.6 L1088.6 896.5 L1087.1 893.3 L1086.0 890.1 L1085.4 886.9 L1085.2 883.6 L1085.4 880.3 L1086.0 877.1 L1087.1 873.9 L1088.6 870.7 L1090.4 867.6 L1092.7 864.5 L1095.4 861.5 L1098.4 858.7 L1101.8 855.9 L1105.6 853.2 L1109.7 850.7 L1114.1 848.3 L1118.8 846.1 L1123.8 844.0 L1129.1 842.1 L1134.5 840.4 L1140.2 838.8 L1146.1 837.5 L1152.2 836.3 L1158.4 835.4 L1164.6 834.7 L1171.0 834.1 L1177.4 833.8 L1183.9 833.7 L1190.4 833.8 L1196.8 834.1 L1203.2 834.7 L1209.4 835.4 L1215.6 836.3 L1221.7 837.5 L1227.6 838.8 L1233.2 840.4 L1238.7 842.1 L1244.0 844.0 L1249.0 846.1 L1253.7 848.3 L1258.1 850.7 L1262.2 853.2 L1266.0 855.9 L1269.4 858.6 L1272.4 861.5 L1275.1 864.5 L1277.4 867.6 L1279.2 870.7 L1280.7 873.9 L1281.8 877.1 L1282.4 880.3 Z M1276.7 965.6 L1276.5 968.7 L1275.9 971.7 L1274.9 974.8 L1273.5 977.7 L1271.8 980.7 L1269.6 983.6 L1267.1 986.4 L1264.2 989.1 L1261.0 991.7 L1257.5 994.2 L1253.7 996.5 L1249.5 998.8 L1245.1 1000.9 L1240.4 1002.8 L1235.4 1004.6 L1230.3 1006.2 L1224.9 1007.7 L1219.4 1008.9 L1213.7 1010.0 L1207.9 1010.9 L1202.0 1011.6 L1196.0 1012.1 L1190.0 1012.4 L1183.9 1012.5 L1177.8 1012.4 L1171.8 1012.1 L1165.8 1011.6 L1159.9 1010.9 L1154.1 1010.0 L1148.4 1008.9 L1142.9 1007.7 L1137.5 1006.2 L1132.4 1004.6 L1127.4 1002.8 L1122.7 1000.9 L1118.3 998.8 L1114.1 996.5 L1110.3 994.2 L1106.8 991.7 L1103.6 989.1 L1100.7 986.4 L1098.2 983.6 L1096.0 980.7 L1094.3 977.7 L1092.9 974.8 L1091.9 971.7 L1091.3 968.7 L1091.1 965.6 L1091.3 962.5 L1091.9 959.5 L1092.9 956.5 L1094.3 953.5 L1096.0 950.5 L1098.2 947.7 L1100.7 944.9 L1103.6 942.2 L1106.8 939.5 L1110.3 937.1 L1114.1 934.7 L1118.3 932.4 L1122.7 930.3 L1127.4 928.4 L1132.4 926.6 L1137.5 925.0 L1142.9 923.5 L1148.4 922.3 L1154.1 921.2 L1159.9 920.3 L1165.8 919.6 L1171.8 919.1 L1177.8 918.8 L1183.9 918.7 L1190.0 918.8 L1196.0 919.1 L1202.0 919.6 L1207.9 920.3 L1213.7 921.2 L1219.4 922.3 L1224.9 923.5 L1230.3 925.0 L1235.4 926.6 L1240.4 928.4 L1245.1 930.3 L1249.5 932.4 L1253.7 934.7 L1257.5 937.1 L1261.0 939.5 L1264.2 942.2 L1267.1 944.9 L1269.6 947.7 L1271.8 950.5 L1273.5 953.5 L1274.9 956.5 L1275.9 959.5 L1276.5 962.5 Z " fill="url(#gHoleR)" fill-rule="evenodd"/><path d="M1276.7 965.6 L1276.5 968.7 L1275.9 971.7 L1274.9 974.8 L1273.5 977.7 L1271.8 980.7 L1269.6 983.6 L1267.1 986.4 L1264.2 989.1 L1261.0 991.7 L1257.5 994.2 L1253.7 996.5 L1249.5 998.8 L1245.1 1000.9 L1240.4 1002.8 L1235.4 1004.6 L1230.3 1006.2 L1224.9 1007.7 L1219.4 1008.9 L1213.7 1010.0 L1207.9 1010.9 L1202.0 1011.6 L1196.0 1012.1 L1190.0 1012.4 L1183.9 1012.5 L1177.8 1012.4 L1171.8 1012.1 L1165.8 1011.6 L1159.9 1010.9 L1154.1 1010.0 L1148.4 1008.9 L1142.9 1007.7 L1137.5 1006.2 L1132.4 1004.6 L1127.4 1002.8 L1122.7 1000.9 L1118.3 998.8 L1114.1 996.5 L1110.3 994.2 L1106.8 991.7 L1103.6 989.1 L1100.7 986.4 L1098.2 983.6 L1096.0 980.7 L1094.3 977.7 L1092.9 974.8 L1091.9 971.7 L1091.3 968.7 L1091.1 965.6 L1091.3 962.5 L1091.9 959.5 L1092.9 956.5 L1094.3 953.5 L1096.0 950.5 L1098.2 947.7 L1100.7 944.9 L1103.6 942.2 L1106.8 939.5 L1110.3 937.1 L1114.1 934.7 L1118.3 932.4 L1122.7 930.3 L1127.4 928.4 L1132.4 926.6 L1137.5 925.0 L1142.9 923.5 L1148.4 922.3 L1154.1 921.2 L1159.9 920.3 L1165.8 919.6 L1171.8 919.1 L1177.8 918.8 L1183.9 918.7 L1190.0 918.8 L1196.0 919.1 L1202.0 919.6 L1207.9 920.3 L1213.7 921.2 L1219.4 922.3 L1224.9 923.5 L1230.3 925.0 L1235.4 926.6 L1240.4 928.4 L1245.1 930.3 L1249.5 932.4 L1253.7 934.7 L1257.5 937.1 L1261.0 939.5 L1264.2 942.2 L1267.1 944.9 L1269.6 947.7 L1271.8 950.5 L1273.5 953.5 L1274.9 956.5 L1275.9 959.5 L1276.5 962.5 Z " fill="none" stroke="#1c1f23" stroke-width="1.3" stroke-linejoin="round"/></g>
<path d="M1282.6 883.6 L1282.4 886.9 L1281.8 890.1 L1280.7 893.3 L1279.2 896.5 L1277.4 899.6 L1275.1 902.7 L1272.4 905.7 L1269.4 908.6 L1266.0 911.3 L1262.2 914.0 L1258.1 916.5 L1253.7 918.9 L1249.0 921.1 L1244.0 923.2 L1238.7 925.1 L1233.2 926.8 L1227.6 928.4 L1221.7 929.7 L1215.6 930.9 L1209.4 931.8 L1203.2 932.5 L1196.8 933.1 L1190.4 933.4 L1183.9 933.5 L1177.4 933.4 L1171.0 933.1 L1164.6 932.5 L1158.4 931.8 L1152.2 930.9 L1146.1 929.7 L1140.2 928.4 L1134.6 926.8 L1129.1 925.1 L1123.8 923.2 L1118.8 921.1 L1114.1 918.9 L1109.7 916.5 L1105.6 914.0 L1101.8 911.3 L1098.4 908.6 L1095.4 905.7 L1092.7 902.7 L1090.4 899.6 L1088.6 896.5 L1087.1 893.3 L1086.0 890.1 L1085.4 886.9 L1085.2 883.6 L1085.4 880.3 L1086.0 877.1 L1087.1 873.9 L1088.6 870.7 L1090.4 867.6 L1092.7 864.5 L1095.4 861.5 L1098.4 858.7 L1101.8 855.9 L1105.6 853.2 L1109.7 850.7 L1114.1 848.3 L1118.8 846.1 L1123.8 844.0 L1129.1 842.1 L1134.5 840.4 L1140.2 838.8 L1146.1 837.5 L1152.2 836.3 L1158.4 835.4 L1164.6 834.7 L1171.0 834.1 L1177.4 833.8 L1183.9 833.7 L1190.4 833.8 L1196.8 834.1 L1203.2 834.7 L1209.4 835.4 L1215.6 836.3 L1221.7 837.5 L1227.6 838.8 L1233.2 840.4 L1238.7 842.1 L1244.0 844.0 L1249.0 846.1 L1253.7 848.3 L1258.1 850.7 L1262.2 853.2 L1266.0 855.9 L1269.4 858.6 L1272.4 861.5 L1275.1 864.5 L1277.4 867.6 L1279.2 870.7 L1280.7 873.9 L1281.8 877.1 L1282.4 880.3 Z " fill="none" stroke="#1c1f23" stroke-width="1.3" stroke-linejoin="round"/>
<path d="M1229.8 1067.0 L1521.5 811.0 L1523.0 896.0 L1229.8 1151.0 Z" fill="#7c848e" stroke="#1c1f23" stroke-width="1.3" stroke-linejoin="round"/>
<path d="M764.6 880 L764.6 895 C764.6 914.5 751.3 926.3 734 921.3 L763.5 892 Z" fill="#8d97a1"/>
<path d="M734 920.5 L764.5 892.5" fill="none" stroke="#1c1f23" stroke-width="1.3" stroke-linejoin="round"/>
<path d="M850.2 918.5 L1142.0 669.4 Q1143.0 703.8 1173.9 711.8 L884.0 965.6 C864.75 960 850 938.8 850.2 918.5 Z" fill="url(#gFil)"/>
<g mask="url(#mFil)"><path d="M850.2 918.5 L1142.0 669.4 Q1143.0 703.8 1173.9 711.8 L884.0 965.6 C864.75 960 850 938.8 850.2 918.5 Z" fill="url(#gFil2)"/></g>
<path d="M850.2 918.5 L1142.0 669.4" fill="none" stroke="#1c1f23" stroke-width="1.3" stroke-linejoin="round"/>
<path d="M884.0 965.6 L1173.9 711.8" fill="none" stroke="#1c1f23" stroke-width="1.3" stroke-linejoin="round"/>
<path d="M1142.0 669.4 Q1143 703.8 1173.9 711.8" fill="none" stroke="#1c1f23" stroke-width="1.3" stroke-linejoin="round"/>
<path d="M849.6 533.0 L1142.0 280.5 L1142.0 669.4 L850.2 918.5 Z M1063.0 554.8 L1062.9 562.6 L1062.4 570.6 L1061.7 578.8 L1060.7 587.2 L1059.4 595.7 L1057.8 604.2 L1056.0 612.9 L1053.9 621.5 L1051.5 630.1 L1048.9 638.7 L1046.1 647.1 L1043.1 655.5 L1039.8 663.6 L1036.4 671.6 L1032.8 679.3 L1029.0 686.7 L1025.1 693.9 L1021.0 700.7 L1016.9 707.1 L1012.6 713.2 L1008.3 718.8 L1003.9 724.0 L999.4 728.7 L995.0 733.0 L990.6 736.8 L986.1 740.0 L981.7 742.7 L977.4 744.9 L973.1 746.5 L969.0 747.5 L964.9 748.0 L961.0 747.9 L957.2 747.3 L953.6 746.1 L950.2 744.3 L946.9 742.0 L943.9 739.2 L941.1 735.8 L938.5 731.9 L936.1 727.5 L934.0 722.6 L932.2 717.3 L930.6 711.6 L929.3 705.4 L928.3 698.8 L927.6 691.9 L927.1 684.7 L927.0 677.2 L927.1 669.4 L927.6 661.4 L928.3 653.2 L929.3 644.8 L930.6 636.3 L932.2 627.8 L934.0 619.1 L936.1 610.5 L938.5 601.9 L941.1 593.3 L943.9 584.9 L946.9 576.5 L950.2 568.4 L953.6 560.4 L957.2 552.7 L961.0 545.3 L964.9 538.1 L969.0 531.3 L973.1 524.9 L977.4 518.8 L981.7 513.2 L986.1 508.0 L990.6 503.3 L995.0 499.0 L999.4 495.2 L1003.9 492.0 L1008.3 489.3 L1012.6 487.1 L1016.9 485.5 L1021.0 484.5 L1025.1 484.0 L1029.0 484.1 L1032.8 484.7 L1036.4 485.9 L1039.8 487.7 L1043.1 490.0 L1046.1 492.8 L1048.9 496.2 L1051.5 500.1 L1053.9 504.5 L1056.0 509.4 L1057.8 514.7 L1059.4 520.4 L1060.7 526.6 L1061.7 533.2 L1062.4 540.1 L1062.9 547.3 Z " fill="#7c848e" fill-rule="evenodd" stroke="#1c1f23" stroke-width="1.3" stroke-linejoin="round"/>
<g clip-path="url(#cHoleP)"><path d="M1063.0 554.8 L1062.9 562.6 L1062.4 570.6 L1061.7 578.8 L1060.7 587.2 L1059.4 595.7 L1057.8 604.2 L1056.0 612.9 L1053.9 621.5 L1051.5 630.1 L1048.9 638.7 L1046.1 647.1 L1043.1 655.5 L1039.8 663.6 L1036.4 671.6 L1032.8 679.3 L1029.0 686.7 L1025.1 693.9 L1021.0 700.7 L1016.9 707.1 L1012.6 713.2 L1008.3 718.8 L1003.9 724.0 L999.4 728.7 L995.0 733.0 L990.6 736.8 L986.1 740.0 L981.7 742.7 L977.4 744.9 L973.1 746.5 L969.0 747.5 L964.9 748.0 L961.0 747.9 L957.2 747.3 L953.6 746.1 L950.2 744.3 L946.9 742.0 L943.9 739.2 L941.1 735.8 L938.5 731.9 L936.1 727.5 L934.0 722.6 L932.2 717.3 L930.6 711.6 L929.3 705.4 L928.3 698.8 L927.6 691.9 L927.1 684.7 L927.0 677.2 L927.1 669.4 L927.6 661.4 L928.3 653.2 L929.3 644.8 L930.6 636.3 L932.2 627.8 L934.0 619.1 L936.1 610.5 L938.5 601.9 L941.1 593.3 L943.9 584.9 L946.9 576.5 L950.2 568.4 L953.6 560.4 L957.2 552.7 L961.0 545.3 L964.9 538.1 L969.0 531.3 L973.1 524.9 L977.4 518.8 L981.7 513.2 L986.1 508.0 L990.6 503.3 L995.0 499.0 L999.4 495.2 L1003.9 492.0 L1008.3 489.3 L1012.6 487.1 L1016.9 485.5 L1021.0 484.5 L1025.1 484.0 L1029.0 484.1 L1032.8 484.7 L1036.4 485.9 L1039.8 487.7 L1043.1 490.0 L1046.1 492.8 L1048.9 496.2 L1051.5 500.1 L1053.9 504.5 L1056.0 509.4 L1057.8 514.7 L1059.4 520.4 L1060.7 526.6 L1061.7 533.2 L1062.4 540.1 L1062.9 547.3 Z M979.0 530.3 L978.9 538.1 L978.4 546.1 L977.7 554.3 L976.7 562.7 L975.4 571.2 L973.8 579.7 L972.0 588.4 L969.9 597.0 L967.5 605.6 L964.9 614.2 L962.1 622.6 L959.1 631.0 L955.8 639.1 L952.4 647.1 L948.8 654.8 L945.0 662.2 L941.1 669.4 L937.0 676.2 L932.9 682.6 L928.6 688.7 L924.3 694.3 L919.9 699.5 L915.4 704.2 L911.0 708.5 L906.6 712.3 L902.1 715.5 L897.7 718.2 L893.4 720.4 L889.1 722.0 L885.0 723.0 L880.9 723.5 L877.0 723.4 L873.2 722.8 L869.6 721.6 L866.2 719.8 L862.9 717.5 L859.9 714.7 L857.1 711.3 L854.5 707.4 L852.1 703.0 L850.0 698.1 L848.2 692.8 L846.6 687.1 L845.3 680.9 L844.3 674.3 L843.6 667.4 L843.1 660.2 L843.0 652.7 L843.1 644.9 L843.6 636.9 L844.3 628.7 L845.3 620.3 L846.6 611.8 L848.2 603.3 L850.0 594.6 L852.1 586.0 L854.5 577.4 L857.1 568.8 L859.9 560.4 L862.9 552.0 L866.2 543.9 L869.6 535.9 L873.2 528.2 L877.0 520.8 L880.9 513.6 L885.0 506.8 L889.1 500.4 L893.4 494.3 L897.7 488.7 L902.1 483.5 L906.6 478.8 L911.0 474.5 L915.4 470.7 L919.9 467.5 L924.3 464.8 L928.6 462.6 L932.9 461.0 L937.0 460.0 L941.1 459.5 L945.0 459.6 L948.8 460.2 L952.4 461.4 L955.8 463.2 L959.1 465.5 L962.1 468.3 L964.9 471.7 L967.5 475.6 L969.9 480.0 L972.0 484.9 L973.8 490.2 L975.4 495.9 L976.7 502.1 L977.7 508.7 L978.4 515.6 L978.9 522.8 Z " fill="url(#gHoleP)" fill-rule="evenodd"/><path d="M979.0 530.3 L978.9 538.1 L978.4 546.1 L977.7 554.3 L976.7 562.7 L975.4 571.2 L973.8 579.7 L972.0 588.4 L969.9 597.0 L967.5 605.6 L964.9 614.2 L962.1 622.6 L959.1 631.0 L955.8 639.1 L952.4 647.1 L948.8 654.8 L945.0 662.2 L941.1 669.4 L937.0 676.2 L932.9 682.6 L928.6 688.7 L924.3 694.3 L919.9 699.5 L915.4 704.2 L911.0 708.5 L906.6 712.3 L902.1 715.5 L897.7 718.2 L893.4 720.4 L889.1 722.0 L885.0 723.0 L880.9 723.5 L877.0 723.4 L873.2 722.8 L869.6 721.6 L866.2 719.8 L862.9 717.5 L859.9 714.7 L857.1 711.3 L854.5 707.4 L852.1 703.0 L850.0 698.1 L848.2 692.8 L846.6 687.1 L845.3 680.9 L844.3 674.3 L843.6 667.4 L843.1 660.2 L843.0 652.7 L843.1 644.9 L843.6 636.9 L844.3 628.7 L845.3 620.3 L846.6 611.8 L848.2 603.3 L850.0 594.6 L852.1 586.0 L854.5 577.4 L857.1 568.8 L859.9 560.4 L862.9 552.0 L866.2 543.9 L869.6 535.9 L873.2 528.2 L877.0 520.8 L880.9 513.6 L885.0 506.8 L889.1 500.4 L893.4 494.3 L897.7 488.7 L902.1 483.5 L906.6 478.8 L911.0 474.5 L915.4 470.7 L919.9 467.5 L924.3 464.8 L928.6 462.6 L932.9 461.0 L937.0 460.0 L941.1 459.5 L945.0 459.6 L948.8 460.2 L952.4 461.4 L955.8 463.2 L959.1 465.5 L962.1 468.3 L964.9 471.7 L967.5 475.6 L969.9 480.0 L972.0 484.9 L973.8 490.2 L975.4 495.9 L976.7 502.1 L977.7 508.7 L978.4 515.6 L978.9 522.8 Z " fill="none" stroke="#1c1f23" stroke-width="1.3" stroke-linejoin="round"/></g>
<path d="M1063.0 554.8 L1062.9 562.6 L1062.4 570.6 L1061.7 578.8 L1060.7 587.2 L1059.4 595.7 L1057.8 604.2 L1056.0 612.9 L1053.9 621.5 L1051.5 630.1 L1048.9 638.7 L1046.1 647.1 L1043.1 655.5 L1039.8 663.6 L1036.4 671.6 L1032.8 679.3 L1029.0 686.7 L1025.1 693.9 L1021.0 700.7 L1016.9 707.1 L1012.6 713.2 L1008.3 718.8 L1003.9 724.0 L999.4 728.7 L995.0 733.0 L990.6 736.8 L986.1 740.0 L981.7 742.7 L977.4 744.9 L973.1 746.5 L969.0 747.5 L964.9 748.0 L961.0 747.9 L957.2 747.3 L953.6 746.1 L950.2 744.3 L946.9 742.0 L943.9 739.2 L941.1 735.8 L938.5 731.9 L936.1 727.5 L934.0 722.6 L932.2 717.3 L930.6 711.6 L929.3 705.4 L928.3 698.8 L927.6 691.9 L927.1 684.7 L927.0 677.2 L927.1 669.4 L927.6 661.4 L928.3 653.2 L929.3 644.8 L930.6 636.3 L932.2 627.8 L934.0 619.1 L936.1 610.5 L938.5 601.9 L941.1 593.3 L943.9 584.9 L946.9 576.5 L950.2 568.4 L953.6 560.4 L957.2 552.7 L961.0 545.3 L964.9 538.1 L969.0 531.3 L973.1 524.9 L977.4 518.8 L981.7 513.2 L986.1 508.0 L990.6 503.3 L995.0 499.0 L999.4 495.2 L1003.9 492.0 L1008.3 489.3 L1012.6 487.1 L1016.9 485.5 L1021.0 484.5 L1025.1 484.0 L1029.0 484.1 L1032.8 484.7 L1036.4 485.9 L1039.8 487.7 L1043.1 490.0 L1046.1 492.8 L1048.9 496.2 L1051.5 500.1 L1053.9 504.5 L1056.0 509.4 L1057.8 514.7 L1059.4 520.4 L1060.7 526.6 L1061.7 533.2 L1062.4 540.1 L1062.9 547.3 Z " fill="none" stroke="#1c1f23" stroke-width="1.3" stroke-linejoin="round"/>
<path d="M764.5 508.5 L1057.5 254.8 L1142.0 280.5 L849.6 533.0 Z" fill="#8a949e" stroke="#1c1f23" stroke-width="1.3" stroke-linejoin="round"/>
<path d="M384.0 821.0 L734 921.3 C751.3 926.3 764.6 914.5 764.6 895 L764.5 508.5 L849.6 533.0 L850.2 918.5 C850 938.8 864.75 960 884 965.6 L1229.8 1067.0 L1229.8 1151.0 L384.0 905.6 Z" fill="#4d5257" stroke="#1c1f23" stroke-width="1.3" stroke-linejoin="round"/>
<circle cx="953" cy="605.2" r="6.4" fill="#8e8e8e" stroke="#2e2e2e" stroke-width="3"/><circle cx="953" cy="605.6" r="1.8" fill="#1a1a1a"/></svg>
<!-- view cube -->
<svg class="abs" style="left:1320px;top:120px" width="280" height="280" viewBox="0 0 280 280">
<g fill="#dde6ef">
<path d="M140.6 23 L152 38 H129.2 Z"/>
<path d="M140.6 250 L152 235 H129.2 Z"/>
<path d="M27 137 L42 126 V148 Z"/>
<path d="M254 137 L239 126 V148 Z"/>
<path d="M108 34 Q80 44 66 60 L72 66 Q86 52 111 43 Z"/>
<path d="M58 74 L60 55 L76 70 Z"/>
<path d="M173 34 Q201 44 215 60 L209 66 Q195 52 170 43 Z"/>
<path d="M223 74 L221 55 L205 70 Z"/>
</g>
<!-- cube body -->
<path d="M97 84 Q112 73 134 73 L186 88 Q201.5 93 201.5 108 V158 Q201.5 170 192 178 L162 199 Q151 205 139 201.5 L95 188 Q84 184 84 172 V106 Q84 92 97 84 Z" fill="#e2e9f1"/>
<path d="M104 98 Q120 83 136 82.5 L174 93 Q184 97 175 104 Q162 113.5 149 112 L108 103 Q99 101 104 98 Z" fill="#fff"/>
<path d="M88 132 Q88 121 98 123.5 L138 134 Q147 136.5 147 146 V182 Q147 192.5 137 190 L97 178.5 Q88 176 88 167 Z" fill="#fff"/>
<path d="M163 148 Q163 139 170 132 L189 112.5 Q197 105 197 116 V152 Q197 160 191 166 L172 184 Q163 191 163 180 Z" fill="#fff"/>
<circle cx="153.4" cy="131.2" r="10.2" fill="#fff"/>
<path d="M124.5 73 V81 M124.5 112 V134 M147 158 L163 153" stroke="#f3f6fa" stroke-width="3" fill="none"/>
<!-- axes -->
<path d="M77 108.5 V185.4" stroke="#3d3de0" stroke-width="2.6"/>
<path d="M77 185.4 L154 208.3" stroke="#e04848" stroke-width="2.6"/>
<path d="M77 185.4 L122.7 146.2" stroke="#8fd48f" stroke-width="1.8" opacity="0.8"/>
<path d="M77 185.4 L92 172.5" stroke="#35a535" stroke-width="3"/>
<g font-family="Liberation Sans, sans-serif">
<text x="77.6" y="101.8" text-anchor="middle" font-size="20" font-weight="bold" fill="#2f2fdc">Z</text>
<text x="168.4" y="218.8" text-anchor="middle" font-size="20" font-weight="bold" fill="#dc3838">X</text>
<text x="130" y="145.6" text-anchor="middle" font-size="17" fill="#a3dba3">Y</text>
<text transform="matrix(0.95 0.25 0 1 98.8 157.3)" font-size="18" fill="#3a3a3a">Front</text>
<text transform="matrix(0.94 0.30 -0.62 0.62 126.5 96.5)" font-size="17" fill="#4a4a4a">Top</text>
<text transform="matrix(0.62 -0.6 0 1 171.5 160.5)" font-size="13.5" fill="#4a4a4a">Right</text>
</g>
<!-- small cube icon -->
<g fill="none" stroke="#c3ccd6" stroke-width="1.8" stroke-linejoin="round">
<rect x="220" y="221" width="38" height="45" rx="9"/>
<path d="M239 226 L254 234.5 V252 L239 261 L224 252 V234.5 Z"/>
<path d="M224 234.5 L239 243 L254 234.5 M239 243 V261"/>
</g>
</svg>

<!-- bottom bar -->
<div class="abs" style="left:6px;top:1175px;width:1590px;height:45px;background:#dedede;border-top:3px solid #cdcdcd;border-bottom:2px solid #e6eae6"></div>
<div class="abs" style="left:146px;top:1174px;width:238px;height:41px;background:#fff;border-right:2px solid #b4b4b4;border-bottom:2px solid #c2c2c2"></div>
<div class="abs" style="left:385px;top:1178px;width:175px;height:36px;background:#e6e6e6;border-right:1px solid #d2d2d2"></div>
<div class="abs" style="left:1096px;top:1177px;width:1.5px;height:40px;background:#b9b9b9"></div>
<svg class="ico" style="left:26px;top:1184px" width="28" height="26" viewBox="0 0 28 26"><path d="M13.6 3 V23 M3.6 13 H23.6" stroke="#333" stroke-width="4.2" fill="none"/></svg>
<svg class="ico" style="left:96px;top:1184px" width="28" height="26" viewBox="0 0 28 26"><g fill="#444"><rect x="2.5" y="3.5" width="3" height="3"/><rect x="7" y="3.5" width="17" height="3"/><rect x="2.5" y="8.5" width="3" height="3"/><rect x="7" y="8.5" width="17" height="3"/><rect x="2.5" y="13.5" width="3" height="3"/><rect x="7" y="13.5" width="17" height="3"/><rect x="2.5" y="18.5" width="3" height="3"/><rect x="7" y="18.5" width="17" height="3"/></g></svg>
<svg class="ico" style="left:160px;top:1182px" width="28" height="28" viewBox="0 0 28 28"><g fill="none" stroke="#555" stroke-width="2" stroke-linejoin="round"><path d="M11 4 H21.5 Q23.5 4 23.5 6 V24 H6.5 Q3 24 3 20.5 Q3 17 6.5 17 H11 Z"/><path d="M15 10 H19 V16"/></g></svg>
<div class="t" id="ps1" style="left:191.5px;top:1186px;font-size:21px;color:#555;letter-spacing:0.62px">Part Studio 1</div>
<div class="abs" style="left:341px;top:1184px;width:27px;height:25px;background:#43d3a8"></div>
<div class="t" id="dbadge2" style="left:347.5px;top:1188.5px;font-size:17.5px;color:#fff">D</div>
<svg class="ico" style="left:400px;top:1181px" width="28" height="28" viewBox="0 0 28 28"><g fill="none" stroke="#555" stroke-width="2" stroke-linejoin="round"><path d="M5 3.5 H20 Q22.5 3.5 22.5 6 V21 Q22.5 24.5 19 24.5 H8 Q3 24.5 3 19.5 V5.5 Q3 3.5 5 3.5 Z"/><path d="M7 8 H18 V19 H7 Z" fill="#bbb" stroke-width="1.4"/><path d="M7 12 H18"/></g></svg>
<div class="t" id="as1" style="left:431px;top:1185px;font-size:21px;color:#777;letter-spacing:0.32px">Assembly 1</div>

</div>
</body>
</html>
